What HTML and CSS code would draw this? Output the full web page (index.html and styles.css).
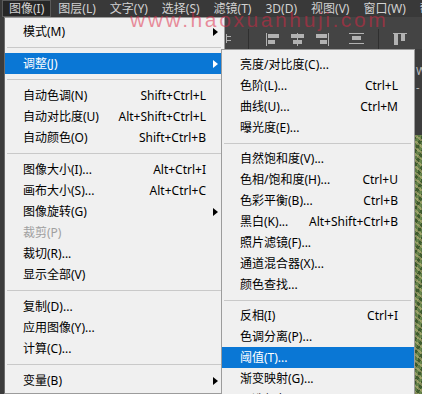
FILE: index.html
```html
<!DOCTYPE html>
<html lang="zh-CN">
<head>
  <meta charset="UTF-8" />
  <title>图像 菜单</title>
  <link rel="stylesheet" href="styles.css">
</head>
<body>
  <div class="app">
    <nav class="menubar">
      <span class="menubar-item is-open">图像(I)</span>
      <span class="menubar-item">图层(L)</span>
      <span class="menubar-item">文字(Y)</span>
      <span class="menubar-item">选择(S)</span>
      <span class="menubar-item">滤镜(T)</span>
      <span class="menubar-item">3D(D)</span>
      <span class="menubar-item">视图(V)</span>
      <span class="menubar-item">窗口(W)</span>
      <span class="menubar-item">帮助(H)</span>
    </nav>

    <div class="workspace">
      <div class="edge"></div>

      <ul class="menu main-menu">
        <li class="item has-sub"><span>模式(M)</span></li>
        <li class="sep"></li>
        <li class="item has-sub active"><span>调整(J)</span></li>
        <li class="sep"></li>
        <li class="item"><span>自动色调(N)</span><span class="key">Shift+Ctrl+L</span></li>
        <li class="item"><span>自动对比度(U)</span><span class="key">Alt+Shift+Ctrl+L</span></li>
        <li class="item"><span>自动颜色(O)</span><span class="key">Shift+Ctrl+B</span></li>
        <li class="sep"></li>
        <li class="item"><span>图像大小(I)...</span><span class="key">Alt+Ctrl+I</span></li>
        <li class="item"><span>画布大小(S)...</span><span class="key">Alt+Ctrl+C</span></li>
        <li class="item has-sub"><span>图像旋转(G)</span></li>
        <li class="item disabled"><span>裁剪(P)</span></li>
        <li class="item"><span>裁切(R)...</span></li>
        <li class="item"><span>显示全部(V)</span></li>
        <li class="sep"></li>
        <li class="item"><span>复制(D)...</span></li>
        <li class="item"><span>应用图像(Y)...</span></li>
        <li class="item"><span>计算(C)...</span></li>
        <li class="sep"></li>
        <li class="item has-sub"><span>变量(B)</span></li>
      </ul>

      <div class="canvas-area">
        <div class="options-bar">
          <svg width="197" height="32" viewBox="0 0 197 32" fill="#b2b2b2">
            <rect x="1" y="17" width="1" height="9" />
            <rect x="2" y="19" width="4" height="1" />
            <rect x="2" y="23" width="4" height="1" />
            <rect x="23" y="12" width="1" height="20" fill="#2f2f2f" />
            <rect x="41" y="16" width="1" height="13" />
            <rect x="43" y="17" width="11" height="4" />
            <rect x="43" y="23" width="7" height="4" />
            <rect x="72" y="16" width="1" height="13" />
            <rect x="66" y="17" width="13" height="4" />
            <rect x="68" y="23" width="9" height="4" />
            <rect x="103" y="16" width="1" height="13" />
            <rect x="91" y="17" width="11" height="4" />
            <rect x="95" y="23" width="7" height="4" />
            <rect x="124" y="16" width="15" height="1" />
            <rect x="127" y="19" width="9" height="4" />
            <rect x="124" y="26" width="15" height="1" />
            <rect x="153" y="12" width="1" height="20" fill="#2f2f2f" />
            <rect x="168" y="16" width="14" height="1" />
            <rect x="169" y="17" width="4" height="11" />
            <rect x="176" y="17" width="4" height="7" />
          </svg>
        </div>
        <div class="panel-strip"><span>W</span><span>-</span></div>
        <div class="photo"></div>
      </div>
    </div>

    <ul class="menu sub-menu">
      <li class="item"><span>亮度/对比度(C)...</span></li>
      <li class="item"><span>色阶(L)...</span><span class="key">Ctrl+L</span></li>
      <li class="item"><span>曲线(U)...</span><span class="key">Ctrl+M</span></li>
      <li class="item"><span>曝光度(E)...</span></li>
      <li class="sep"></li>
      <li class="item"><span>自然饱和度(V)...</span></li>
      <li class="item"><span>色相/饱和度(H)...</span><span class="key">Ctrl+U</span></li>
      <li class="item"><span>色彩平衡(B)...</span><span class="key">Ctrl+B</span></li>
      <li class="item"><span>黑白(K)...</span><span class="key">Alt+Shift+Ctrl+B</span></li>
      <li class="item"><span>照片滤镜(F)...</span></li>
      <li class="item"><span>通道混合器(X)...</span></li>
      <li class="item"><span>颜色查找...</span></li>
      <li class="sep"></li>
      <li class="item"><span>反相(I)</span><span class="key">Ctrl+I</span></li>
      <li class="item"><span>色调分离(P)...</span></li>
      <li class="item active"><span>阈值(T)...</span></li>
      <li class="item"><span>渐变映射(G)...</span></li>
      <li class="item"><span>可选颜色(S)...</span></li>
    </ul>

    <div class="watermark">www.haoxuanhuji.com</div>
  </div>
</body>
</html>
```

FILE: styles.css
```css
* {
  box-sizing: border-box;
}

html, body {
  margin: 0;
  padding: 0;
  height: 100%;
  overflow: hidden;
  background: #3a3a3a;
}

body {
  font-family: "Noto Sans", "Noto Sans CJK SC", sans-serif;
  font-size: 12px;
}

.app {
  position: relative;
  width: 422px;
  height: 394px;
  overflow: hidden;
}

/* top menu bar */
.menubar {
  display: flex;
  height: 17px;
  padding-left: 2px;
  background: #393939;
  color: #d2d2d2;
  line-height: 15px;
  white-space: nowrap;
}

.menubar-item {
  padding: 0 6px;
  border: 1px solid transparent;
}

.menubar-item.is-open {
  background: #262626;
  border-color: #5a5a5a;
}

/* area under the menu bar */
.workspace {
  display: grid;
  grid-template-columns: 4px 221px 1fr;
  height: 377px;
}

.edge {
  background: #3c3c3c;
}

.main-menu {
  overflow: hidden;
}

.canvas-area {
  display: grid;
  grid-template-rows: 32px 86px 1fr;
  min-width: 0;
}

.options-bar {
  background: #444;
}

.options-bar svg {
  display: block;
}

.panel-strip {
  display: flex;
  flex-direction: column;
  padding: 14px 0 0 191px;
  background: #3d3d3d;
  color: #bdbdbd;
  font-size: 11px;
  line-height: 16px;
}

.photo {
  background:
    repeating-linear-gradient(37deg, rgba(214, 196, 140, .45) 0 2px, transparent 2px 5px),
    repeating-linear-gradient(-61deg, rgba(38, 66, 28, .6) 0 3px, transparent 3px 7px),
    repeating-linear-gradient(90deg, rgba(120, 150, 80, .5) 0 1px, transparent 1px 3px),
    #5e7a47;
}

/* dropdown menus */
.menu {
  list-style: none;
  margin: 0;
  background: #f0f0f0;
  border: 1px solid #9c9c9c;
  color: #000;
}

.main-menu {
  padding: 3px 0 0;
  border-left-color: #6c6c6c;
}

.sub-menu {
  position: absolute;
  left: 221px;
  top: 49px;
  width: 194px;
  height: 400px;
  padding: 4px 0 0;
}

.item {
  display: grid;
  grid-template-columns: 1fr auto 18px;
  height: 21px;
  padding-left: 18px;
  line-height: 21px;
  white-space: nowrap;
}

.sub-menu .item {
  grid-template-columns: 1fr auto 16px;
}

.item.has-sub::after {
  content: "";
  grid-column: 3;
  justify-self: center;
  align-self: center;
  border-left: 5px solid #000;
  border-top: 4.5px solid transparent;
  border-bottom: 4.5px solid transparent;
}

.item.active {
  background: #0a77d5;
  color: #fff;
}

.item.active.has-sub::after {
  border-left-color: #fff;
}

.item.disabled {
  color: #a0a0a0;
}

.sep {
  display: flex;
  align-items: center;
  height: 11px;
  padding: 0 3px 0 2px;
}

.sub-menu .sep {
  height: 10px;
}

.sep::before {
  content: "";
  flex: 1;
  height: 1px;
  background: #c9c9c9;
}

.watermark {
  position: absolute;
  left: 130px;
  top: 10px;
  font-family: "Liberation Sans", sans-serif;
  font-size: 21px;
  line-height: 20px;
  letter-spacing: 2.6px;
  color: rgba(222, 36, 66, .5);
  pointer-events: none;
}
```
